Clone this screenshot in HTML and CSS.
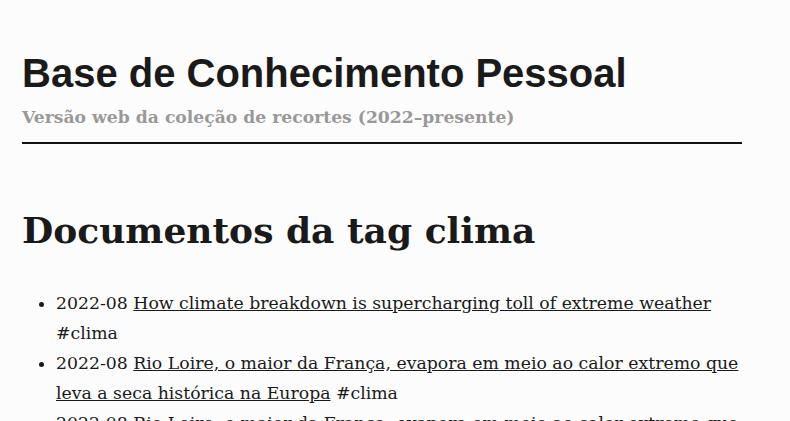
FILE: index.html
```html
<!DOCTYPE html>
<html lang="pt">
<head>
<meta charset="utf-8">
<title>Base de Conhecimento Pessoal</title>
<link rel="stylesheet" href="styles.css">
</head>
<body>
<div class="page">
  <header class="site-header">
    <h2 class="site-title">Base de Conhecimento Pessoal</h2>
    <p class="site-subtitle">Versão web da coleção de recortes (2022–presente)</p>
  </header>
  <main>
    <h1 class="page-title">Documentos da tag clima</h1>
    <ul class="doc-list">
      <li>2022-08 <a href="#">How climate breakdown is supercharging toll of extreme weather</a> #clima</li>
      <li>2022-08 <a href="#">Rio Loire, o maior da França, evapora em meio ao calor extremo que leva a seca histórica na Europa</a> #clima</li>
      <li>2022-08 <a href="#">Rio Loire, o maior da França, evapora em meio ao calor extremo que leva a seca histórica na Europa</a> #clima</li>
    </ul>
  </main>
</div>
</body>
</html>
```

FILE: styles.css
```css
html, body {
  margin: 0;
  padding: 0;
  background: #fcfcfc;
}
body {
  font-family: "DejaVu Serif", Georgia, serif;
  color: #1a1a1a;
  font-size: 17.3px;
  line-height: 30px;
}
.page {
  width: 720px;
  padding: 49px 22px 0;
}
.site-header {
  border-bottom: 2px solid #111;
  padding-bottom: 10px;
}
.site-title {
  font-family: "Liberation Sans", Arial, sans-serif;
  font-weight: bold;
  font-size: 40px;
  line-height: 48px;
  margin: 0;
  color: #1a1a1a;
}
.site-subtitle {
  margin: 5px 0 0;
  font-weight: bold;
  font-size: 17.2px;
  line-height: 30px;
  color: #999;
}
.page-title {
  font-size: 36px;
  line-height: 48px;
  margin: 62px 0 34px;
}
.doc-list {
  margin: 0 -8px 0 0;
  padding-left: 34px;
}
.doc-list a {
  color: #1a1a1a;
  text-decoration: underline;
}
```
